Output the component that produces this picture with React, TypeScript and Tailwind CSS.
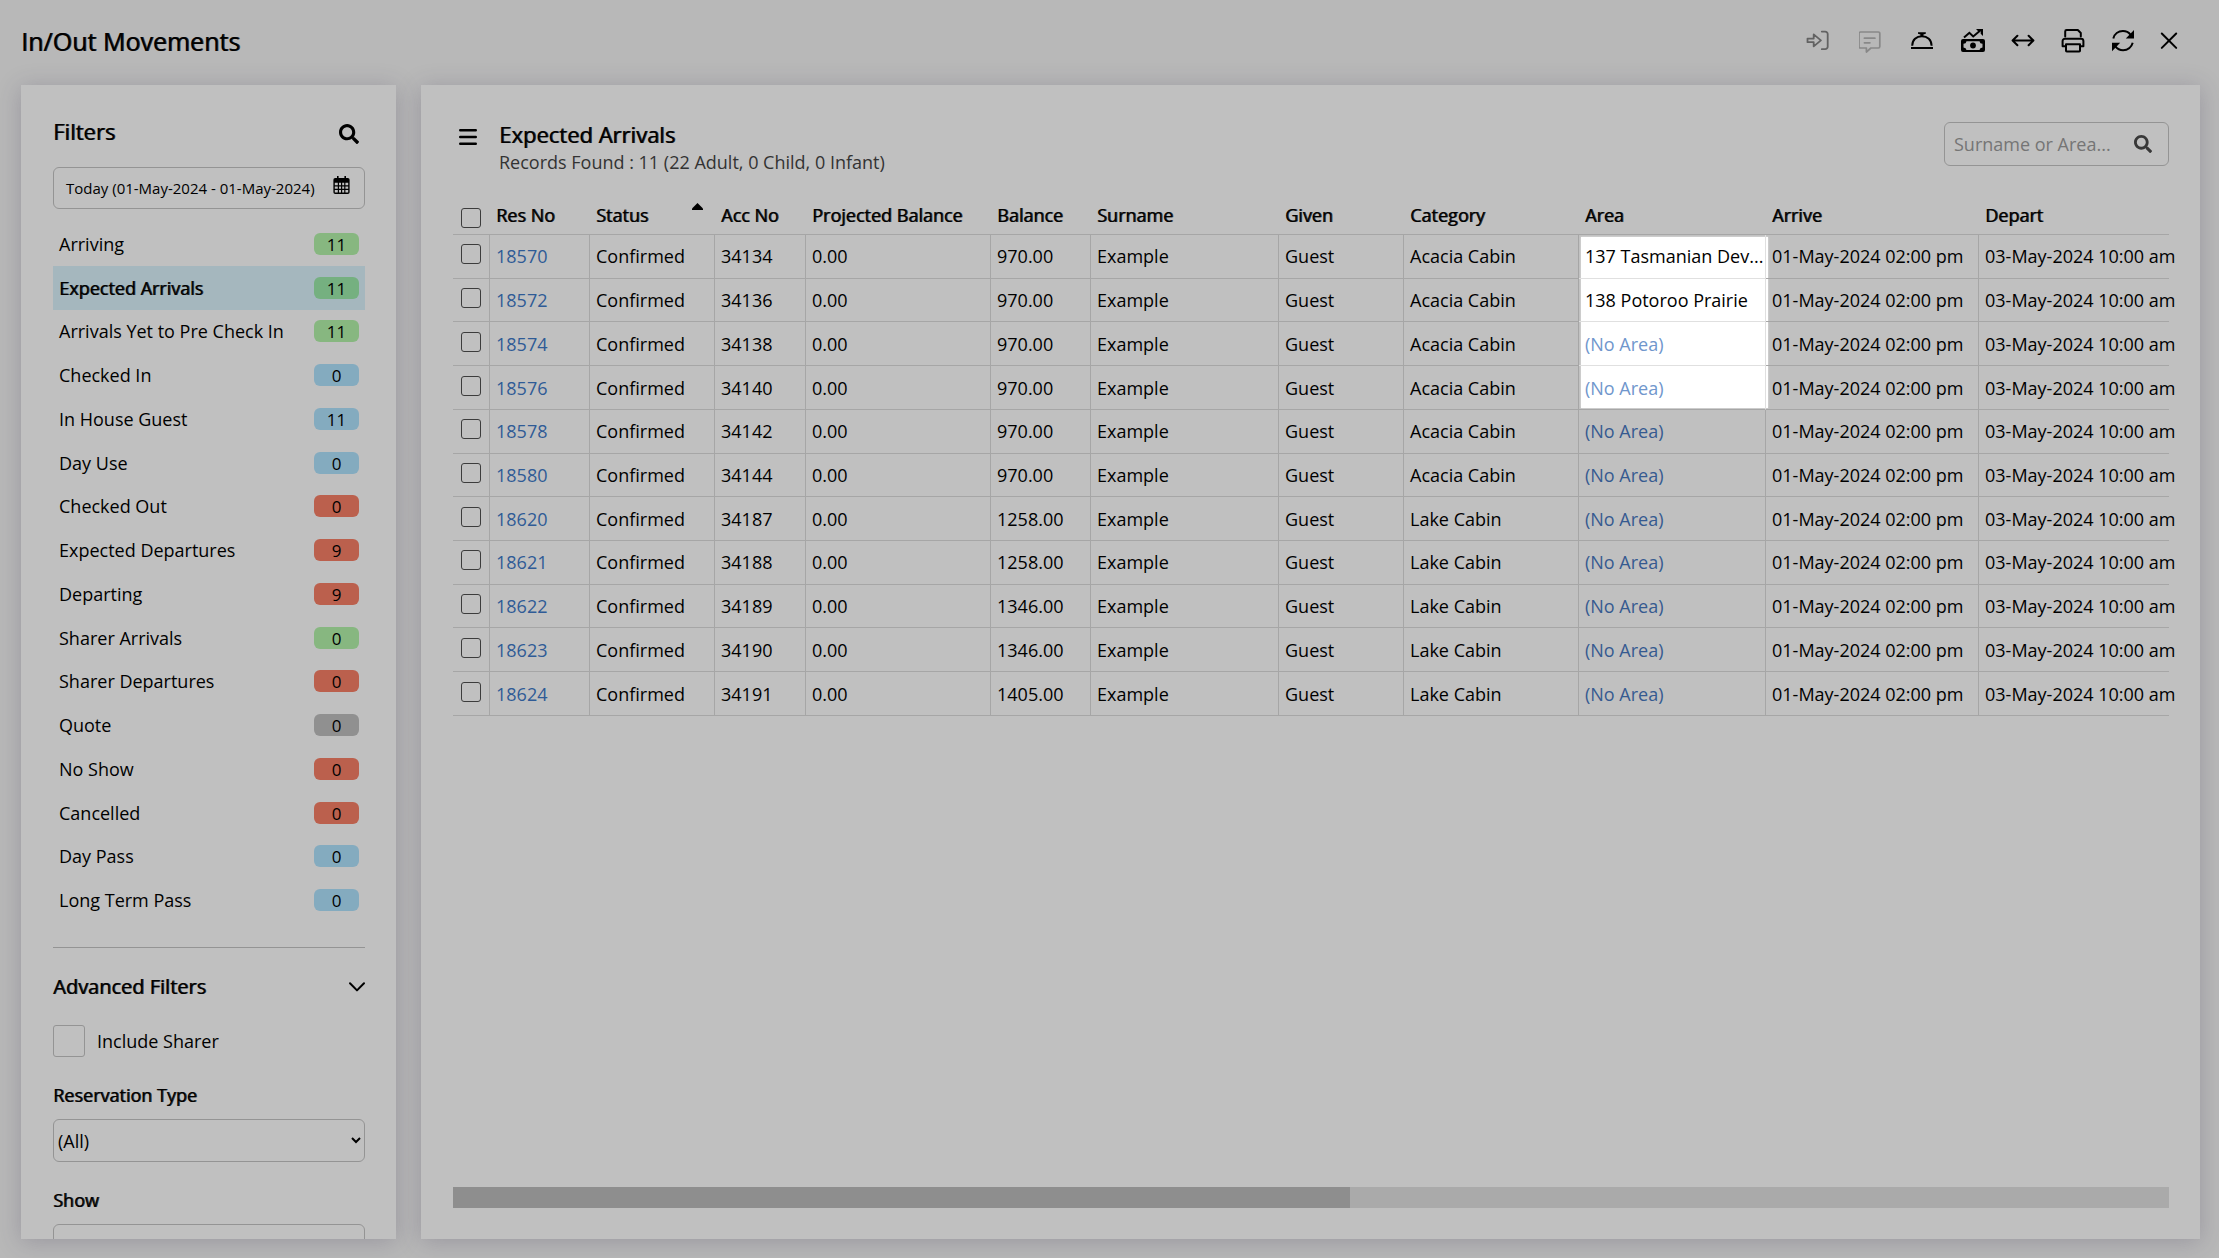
import { useState } from "react";
import { FaSearch } from "react-icons/fa";

const filters = [
  { label: "Arriving", count: 11, color: "bg-[#87b780]" },
  { label: "Expected Arrivals", count: 11, color: "bg-[#75b080]" },
  { label: "Arrivals Yet to Pre Check In", count: 11, color: "bg-[#87b780]" },
  { label: "Checked In", count: 0, color: "bg-[#84abbf]" },
  { label: "In House Guest", count: 11, color: "bg-[#84abbf]" },
  { label: "Day Use", count: 0, color: "bg-[#84abbf]" },
  { label: "Checked Out", count: 0, color: "bg-[#bb604d]" },
  { label: "Expected Departures", count: 9, color: "bg-[#bb604d]" },
  { label: "Departing", count: 9, color: "bg-[#bb604d]" },
  { label: "Sharer Arrivals", count: 0, color: "bg-[#87b780]" },
  { label: "Sharer Departures", count: 0, color: "bg-[#bb604d]" },
  { label: "Quote", count: 0, color: "bg-[#909090]" },
  { label: "No Show", count: 0, color: "bg-[#bb604d]" },
  { label: "Cancelled", count: 0, color: "bg-[#bb604d]" },
  { label: "Day Pass", count: 0, color: "bg-[#84abbf]" },
  { label: "Long Term Pass", count: 0, color: "bg-[#84abbf]" },
];

const reservations = [
  { resNo: "18570", accNo: "34134", balance: "970.00", category: "Acacia Cabin", area: "137 Tasmanian Dev..." },
  { resNo: "18572", accNo: "34136", balance: "970.00", category: "Acacia Cabin", area: "138 Potoroo Prairie" },
  { resNo: "18574", accNo: "34138", balance: "970.00", category: "Acacia Cabin", area: "" },
  { resNo: "18576", accNo: "34140", balance: "970.00", category: "Acacia Cabin", area: "" },
  { resNo: "18578", accNo: "34142", balance: "970.00", category: "Acacia Cabin", area: "" },
  { resNo: "18580", accNo: "34144", balance: "970.00", category: "Acacia Cabin", area: "" },
  { resNo: "18620", accNo: "34187", balance: "1258.00", category: "Lake Cabin", area: "" },
  { resNo: "18621", accNo: "34188", balance: "1258.00", category: "Lake Cabin", area: "" },
  { resNo: "18622", accNo: "34189", balance: "1346.00", category: "Lake Cabin", area: "" },
  { resNo: "18623", accNo: "34190", balance: "1346.00", category: "Lake Cabin", area: "" },
  { resNo: "18624", accNo: "34191", balance: "1405.00", category: "Lake Cabin", area: "" },
];

// rows whose Area cell sits inside the spotlight
const SPOTLIGHT_ROWS = 4;

const strong = "font-normal [text-shadow:1px_0_0_rgb(0_0_0/75%)]";
const panel = "bg-[#c0c0c0] shadow-[0_3px_22px_rgba(60,50,85,0.25)]";
const checkbox =
  "block appearance-none size-5 rounded-[3px] border border-[#3c3c3c] checked:bg-[#3c3c3c]";

export default function App() {
  const [active, setActive] = useState("Expected Arrivals");
  const [search, setSearch] = useState("");
  const [selected, setSelected] = useState<string[]>([]);

  const visible = reservations.filter((r) =>
    r.area.toLowerCase().includes(search.toLowerCase())
  );

  function toggle(resNo: string) {
    setSelected((prev) =>
      prev.includes(resNo) ? prev.filter((r) => r !== resNo) : [...prev, resNo]
    );
  }

  function toggleAll() {
    setSelected(
      selected.length === visible.length ? [] : visible.map((r) => r.resNo)
    );
  }

  return (
    <main className="h-screen flex flex-col overflow-hidden bg-[#b8b8b8] text-black font-['Open_Sans',sans-serif] text-[18px] leading-6">
      <header className="flex shrink-0 items-center justify-between h-[82px] pl-[21px] pr-[42px] mb-[3px]">
        <h1 className={`text-[25px] ${strong}`}>In/Out Movements</h1>
        <Toolbar />
      </header>

      <div className="flex flex-1 min-h-0 gap-[25px] pl-[21px] pr-[19px] pb-[19px]">
        <aside className={`w-[375px] shrink-0 overflow-hidden pl-8 pr-[31px] pt-[29px] ${panel}`}>
          <div className="flex items-center justify-between h-[34px] pr-1.5">
            <h2 className={`text-[22px] ${strong}`}>Filters</h2>
            <button aria-label="Search filters" className="pt-1.5">
              <FaSearch className="size-5" />
            </button>
          </div>

          <button className="flex items-center justify-between w-full h-[42px] mt-[19px] pl-3 pr-[14px] border border-[#949494] rounded-md text-[15px]">
            <span>Today (01-May-2024 - 01-May-2024)</span>
            <CalendarIcon />
          </button>

          <ul className="grid auto-rows-fr h-[700px] mt-[13px]">
            {filters.map((f) => (
              <li key={f.label}>
                <button
                  onClick={() => setActive(f.label)}
                  className={`flex items-center justify-between w-full h-full px-1.5 ${
                    active === f.label ? "bg-[#a5b7be]" : ""
                  }`}
                >
                  <span className={active === f.label ? strong : ""}>{f.label}</span>
                  <span
                    className={`w-[45px] h-[22px] rounded-md text-[17px] leading-6 text-center ${f.color}`}
                  >
                    {f.count}
                  </span>
                </button>
              </li>
            ))}
          </ul>

          <hr className="mt-[25px] border-[#949494]" />

          <button className="flex items-center justify-between w-full h-8 mt-[23px]">
            <h3 className={`text-[20px] ${strong}`}>Advanced Filters</h3>
            <svg viewBox="0 0 16 10" className="w-4 h-[10px]" fill="none" stroke="currentColor" strokeWidth="2" strokeLinecap="round" strokeLinejoin="round">
              <path d="M1 1.2 8 8.4l7-7.2" />
            </svg>
          </button>

          <label className="flex items-center gap-3 h-8 mt-[22px]">
            <input
              type="checkbox"
              className="appearance-none size-8 rounded-[3px] border border-[#949494] checked:bg-[#949494]"
            />
            Include Sharer
          </label>

          <Select id="reservation-type" label="Reservation Type" />
          <Select id="show" label="Show" />
        </aside>

        <section className={`flex flex-1 min-w-0 flex-col pl-8 pr-[31px] pt-[34px] pb-[31px] ${panel}`}>
          <div className="flex items-start justify-between h-[76px]">
            <div className="flex gap-[22px] pl-1.5">
              <button aria-label="Menu" className="self-start mt-[9px]">
                <svg viewBox="0 0 18 18" className="size-[18px]" stroke="currentColor" strokeWidth="2.4" strokeLinecap="round">
                  <path d="M1.2 2.2h15.6M1.2 9h15.6M1.2 15.8h15.6" />
                </svg>
              </button>
              <div>
                <h2 className={`text-[22px] leading-[31px] ${strong}`}>{active}</h2>
                <p className="text-[#333]">Records Found : 11 (22 Adult, 0 Child, 0 Infant)</p>
              </div>
            </div>

            <label className="flex items-center w-[225px] h-11 mt-[3px] pl-[9px] pr-4 border border-[#949494] rounded-md">
              <input
                value={search}
                onChange={(e) => setSearch(e.target.value)}
                placeholder="Surname or Area..."
                aria-label="Surname or Area"
                className="flex-1 min-w-0 outline-none placeholder:text-[#757575]"
              />
              <FaSearch className="size-[18px] text-[#383838]" />
            </label>
          </div>

          <div className="relative">
            <div className="absolute left-[1128px] top-[42px] w-[187px] h-[171px] bg-white shadow-[0_0_2px_rgba(255,255,255,0.6)]" />

            <table className="relative w-full h-[521px] table-fixed border-separate border-spacing-0 text-left whitespace-nowrap">
              <colgroup>
                <col className="w-[37px]" />
                <col className="w-[100px]" />
                <col className="w-[125px]" />
                <col className="w-[91px]" />
                <col className="w-[185px]" />
                <col className="w-[100px]" />
                <col className="w-[188px]" />
                <col className="w-[125px]" />
                <col className="w-[175px]" />
                <col className="w-[187px]" />
                <col className="w-[213px]" />
                <col />
              </colgroup>
              <thead>
                <tr className="h-10">
                  <th className="border-b border-[#a6a6a6] p-0 pl-2 pt-1.5">
                    <input
                      type="checkbox"
                      aria-label="Select all"
                      checked={selected.length > 0 && selected.length === visible.length}
                      onChange={toggleAll}
                      className={checkbox}
                    />
                  </th>
                  <Th>Res No</Th>
                  <Th sorted>Status</Th>
                  <Th>Acc No</Th>
                  <Th>Projected Balance</Th>
                  <Th>Balance</Th>
                  <Th>Surname</Th>
                  <Th>Given</Th>
                  <Th>Category</Th>
                  <Th>Area</Th>
                  <Th>Arrive</Th>
                  <Th>Depart</Th>
                </tr>
              </thead>

              <tbody>
                {visible.map((r, i) => (
                  <tr key={r.resNo}>
                    <td className="border-b border-r border-[#a6a6a6] p-0 pl-2 pb-1">
                      <input
                        type="checkbox"
                        aria-label={`Select ${r.resNo}`}
                        checked={selected.includes(r.resNo)}
                        onChange={() => toggle(r.resNo)}
                        className={checkbox}
                      />
                    </td>
                    <Td>
                      <a href={`#${r.resNo}`} className="text-[#2f5b96]">{r.resNo}</a>
                    </Td>
                    <Td>Confirmed</Td>
                    <Td>{r.accNo}</Td>
                    <Td>0.00</Td>
                    <Td>{r.balance}</Td>
                    <Td>Example</Td>
                    <Td>Guest</Td>
                    <Td>{r.category}</Td>
                    <Td
                      border={
                        i < SPOTLIGHT_ROWS - 1
                          ? "border-[#e0e0e0]"
                          : i === SPOTLIGHT_ROWS - 1
                          ? "border-b-[#a6a6a6] border-r-[#e0e0e0]"
                          : "border-[#a6a6a6]"
                      }
                    >
                      {r.area || (
                        <a href={`#area-${r.resNo}`} className={i < SPOTLIGHT_ROWS ? "text-[#7096cc]" : "text-[#365a90]"}>
                          (No Area)
                        </a>
                      )}
                    </Td>
                    <Td>01-May-2024 02:00 pm</Td>
                    <Td last>03-May-2024 10:00 am</Td>
                  </tr>
                ))}
              </tbody>
            </table>
          </div>

          <div className="mt-auto h-[21px] bg-[#aaaaaa]">
            <div className="w-[52.3%] h-full bg-[#8e8e8e]" />
          </div>
        </section>
      </div>
    </main>
  );
}

function Th({ children, sorted }: any) {
  return (
    <th className={`border-b border-[#a6a6a6] p-0 pl-1.5 ${strong}`}>
      <div className="flex justify-between pr-3">
        {children}
        {sorted && (
          <svg viewBox="0 0 11 7" className="w-[11px] h-[7px]" fill="currentColor">
            <path d="M5.5 0 11 5.4V7H0V5.4z" />
          </svg>
        )}
      </div>
    </th>
  );
}

function Td({ children, last, border = "border-[#a6a6a6]" }: any) {
  return (
    <td className={`border-b p-0 pl-1.5 ${last ? "" : "border-r"} ${border}`}>
      {children}
    </td>
  );
}

function Select({ id, label }: any) {
  return (
    <div className="mt-6">
      <label htmlFor={id} className={`block leading-7 ${strong}`}>
        {label}
      </label>
      <select id={id} className="w-full h-[43px] mt-[10px] border border-[#949494] rounded-md">
        <option>(All)</option>
      </select>
    </div>
  );
}

function CalendarIcon() {
  return (
    <svg viewBox="0 0 17 18" className="w-[17px] h-[18px] mb-1.5">
      <path
        fill="currentColor"
        fillRule="evenodd"
        d="M4 0h1.6v2h5.8V0H13v2h1.8A1.8 1.8 0 0 1 16.6 3.8v12.4a1.8 1.8 0 0 1-1.8 1.8H2.2a1.8 1.8 0 0 1-1.8-1.8V3.8A1.8 1.8 0 0 1 2.2 2H4zM1.800 6.800v2.500h3v-2.500zm4.200 0v2.500h2v-2.500zm3.200 0v2.500h2v-2.500zm3.200 0v2.500h2.800v-2.500zM1.800 10.500v2.300h3v-2.300zm4.200 0v2.300h2v-2.300zm3.200 0v2.300h2v-2.300zm3.200 0v2.300h2.800v-2.300zM1.800 14v2.400h3V14zM6 14v2.400h2V14zm3.200 0v2.400h2V14zm3.200 0v2.400h2.800V14z"
      />
    </svg>
  );
}

function Icon({ label, children, className = "w-6", disabled = false }: any) {
  return (
    <button aria-label={label} disabled={disabled} className={`flex justify-center ${className}`}>
      <svg
        viewBox="0 0 24 24"
        className="size-6 shrink-0"
        fill="none"
        stroke="currentColor"
        strokeWidth="2"
        strokeLinecap="round"
        strokeLinejoin="round"
      >
        {children}
      </svg>
    </button>
  );
}

function Toolbar() {
  return (
    <div className="flex items-center gap-[26px]">
      <Icon label="Check in" disabled className="w-7 text-[#626262]">
        <g strokeWidth="1.8">
          <path d="M2.5 9.6h6.2V5.4l7.2 6-7.2 6v-4.2H2.5z" />
          <path d="M16.8 2.6h3.4a2.5 2.5 0 0 1 2.5 2.5v12.6a2.5 2.5 0 0 1-2.5 2.5h-3.4" />
        </g>
      </Icon>
      <Icon label="Messages" disabled className="w-7 text-[#888]">
        <g strokeWidth="1.7">
          <path d="M1.4 3h18a1.4 1.4 0 0 1 1.4 1.4v13.2a1.4 1.4 0 0 1-1.4 1.4h-7.500L7.400 23v-4h-6A1.400 1.400 0 0 1 0 17.600V4.400A1.400 1.400 0 0 1 1.400 3z" />
          <path d="M5.400 9.200h10.500M5.400 13.800h5.500" />
        </g>
      </Icon>
      <Icon label="Front desk">
        <path d="M0 19h22" strokeLinecap="butt" />
        <path d="M1.2 16.8C1.200 11 5.400 7.200 10.900 7.200s9.700 3.800 9.700 9.600" strokeLinecap="butt" />
        <path d="M7 3.200h7.800v1.600l-2.400.8v1.800h-3V5.600L7 4.800z" fill="currentColor" stroke="none" />
      </Icon>
      <Icon label="Revenue">
        <path d="M3 8.600 8.400 3.800l3.800 3.600L19 1.800" strokeLinecap="butt" strokeLinejoin="miter" />
        <path d="M15 0h7v7l-2.300-2.200v-2.500h-2.500z" fill="currentColor" stroke="none" />
        <path
          d="M2 10h20a2 2 0 0 1 2 2v9a2 2 0 0 1-2 2H2a2 2 0 0 1-2-2v-9a2 2 0 0 1 2-2zm3.500 2.200a3 3 0 0 1-3 2.600v3.600a3 3 0 0 1 3 2.600h13a3 3 0 0 1 3-2.600v-3.600a3 3 0 0 1-3-2.600z"
          fill="currentColor"
          fillRule="evenodd"
          stroke="none"
        />
        <circle cx="12" cy="16.500" r="2.900" fill="currentColor" stroke="none" />
      </Icon>
      <Icon label="Fit columns">
        <path d="M1.800 11.500h20.400M6.400 6.700l-4.800 4.800 4.800 4.800M17.600 6.700l4.800 4.800-4.800 4.800" />
      </Icon>
      <Icon label="Print">
        <path d="M4.200 7.400V2.400A1.400 1.400 0 0 1 5.600 1h11.200l3 3v3.400" />
        <path d="M4.500 17.300H1.600v-5.200a2.400 2.400 0 0 1 2.400-2.400h16a2.400 2.400 0 0 1 2.400 2.400v5.200h-2.900" />
        <path d="M5 15.200h14v6.500a.8.800 0 0 1-.8.800H5.800a.8.800 0 0 1-.8-.8z" />
      </Icon>
      <Icon label="Refresh">
        <path d="M2.300 9.400C3.400 5 7.300 2 11.900 2c3.200 0 6 1.500 7.800 3.800M21.700 13.800c-1.100 4.400-5 7.400-9.600 7.400-3.200 0-6-1.500-7.800-3.800" strokeLinecap="butt" />
        <path d="M23 1v8.400h-8.200zM1 22.200v-8.400h8.200z" fill="currentColor" stroke="none" />
      </Icon>
      <Icon label="Close" className="w-4">
        <path d="M4.800 4.500l14.400 14.400M19.200 4.500 4.800 18.900" />
      </Icon>
    </div>
  );
}
